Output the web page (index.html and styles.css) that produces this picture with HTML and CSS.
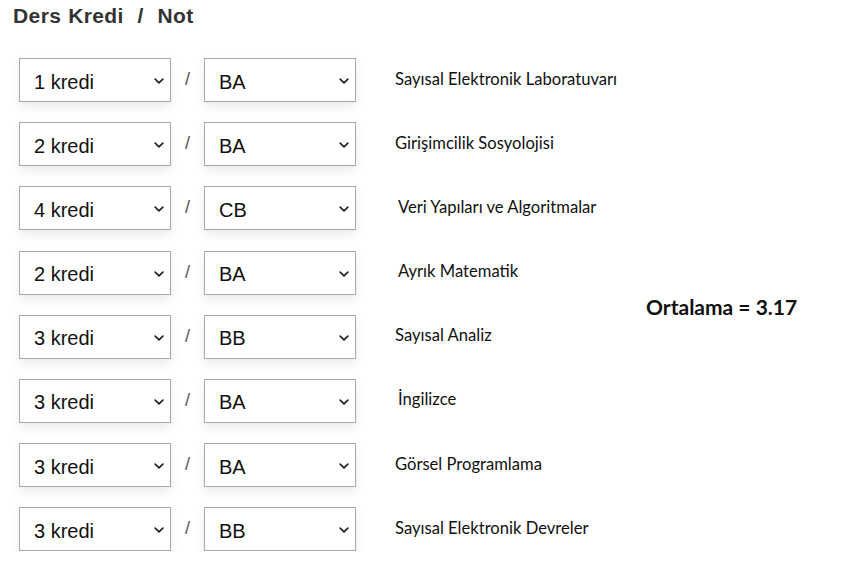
FILE: index.html
```html
<!DOCTYPE html>
<html lang="tr">
<head>
<meta charset="utf-8">
<title>Ortalama Hesaplama</title>
<link rel="stylesheet" href="styles.css">
</head>
<body>
<h1 class="title">Ders Kredi &nbsp;/&nbsp; Not</h1>
<div class="layout">
  <div class="rows">
    <div class="row">
      <div class="sel sel-kredi"><select><option>1 kredi</option></select><svg class="chev" viewBox="0 0 10 6"><path d="M1.2 1.2 L5 4.8 L8.8 1.2" /></svg></div>
      <span class="slash">/</span>
      <div class="sel sel-not"><select><option>BA</option></select><svg class="chev" viewBox="0 0 10 6"><path d="M1.2 1.2 L5 4.8 L8.8 1.2" /></svg></div>
      <span class="course">Sayısal Elektronik Laboratuvarı</span>
    </div>
    <div class="row">
      <div class="sel sel-kredi"><select><option>2 kredi</option></select><svg class="chev" viewBox="0 0 10 6"><path d="M1.2 1.2 L5 4.8 L8.8 1.2" /></svg></div>
      <span class="slash">/</span>
      <div class="sel sel-not"><select><option>BA</option></select><svg class="chev" viewBox="0 0 10 6"><path d="M1.2 1.2 L5 4.8 L8.8 1.2" /></svg></div>
      <span class="course">Girişimcilik Sosyolojisi</span>
    </div>
    <div class="row">
      <div class="sel sel-kredi"><select><option>4 kredi</option></select><svg class="chev" viewBox="0 0 10 6"><path d="M1.2 1.2 L5 4.8 L8.8 1.2" /></svg></div>
      <span class="slash">/</span>
      <div class="sel sel-not"><select><option>CB</option></select><svg class="chev" viewBox="0 0 10 6"><path d="M1.2 1.2 L5 4.8 L8.8 1.2" /></svg></div>
      <span class="course shift">Veri Yapıları ve Algoritmalar</span>
    </div>
    <div class="row">
      <div class="sel sel-kredi"><select><option>2 kredi</option></select><svg class="chev" viewBox="0 0 10 6"><path d="M1.2 1.2 L5 4.8 L8.8 1.2" /></svg></div>
      <span class="slash">/</span>
      <div class="sel sel-not"><select><option>BA</option></select><svg class="chev" viewBox="0 0 10 6"><path d="M1.2 1.2 L5 4.8 L8.8 1.2" /></svg></div>
      <span class="course shift">Ayrık Matematik</span>
    </div>
    <div class="row">
      <div class="sel sel-kredi"><select><option>3 kredi</option></select><svg class="chev" viewBox="0 0 10 6"><path d="M1.2 1.2 L5 4.8 L8.8 1.2" /></svg></div>
      <span class="slash">/</span>
      <div class="sel sel-not"><select><option>BB</option></select><svg class="chev" viewBox="0 0 10 6"><path d="M1.2 1.2 L5 4.8 L8.8 1.2" /></svg></div>
      <span class="course">Sayısal Analiz</span>
    </div>
    <div class="row">
      <div class="sel sel-kredi"><select><option>3 kredi</option></select><svg class="chev" viewBox="0 0 10 6"><path d="M1.2 1.2 L5 4.8 L8.8 1.2" /></svg></div>
      <span class="slash">/</span>
      <div class="sel sel-not"><select><option>BA</option></select><svg class="chev" viewBox="0 0 10 6"><path d="M1.2 1.2 L5 4.8 L8.8 1.2" /></svg></div>
      <span class="course shift">İngilizce</span>
    </div>
    <div class="row">
      <div class="sel sel-kredi"><select><option>3 kredi</option></select><svg class="chev" viewBox="0 0 10 6"><path d="M1.2 1.2 L5 4.8 L8.8 1.2" /></svg></div>
      <span class="slash">/</span>
      <div class="sel sel-not"><select><option>BA</option></select><svg class="chev" viewBox="0 0 10 6"><path d="M1.2 1.2 L5 4.8 L8.8 1.2" /></svg></div>
      <span class="course">Görsel Programlama</span>
    </div>
    <div class="row">
      <div class="sel sel-kredi"><select><option>3 kredi</option></select><svg class="chev" viewBox="0 0 10 6"><path d="M1.2 1.2 L5 4.8 L8.8 1.2" /></svg></div>
      <span class="slash">/</span>
      <div class="sel sel-not"><select><option>BB</option></select><svg class="chev" viewBox="0 0 10 6"><path d="M1.2 1.2 L5 4.8 L8.8 1.2" /></svg></div>
      <span class="course">Sayısal Elektronik Devreler</span>
    </div>
  </div>
  <div class="result">Ortalama = 3.17</div>
</div>
</body>
</html>
```
FILE: styles.css
```css
html, body {
  margin: 0;
  padding: 0;
  background: #ffffff;
}
body {
  padding: 0 0 0 13px;
  font-family: "Liberation Sans", Arial, sans-serif;
}
.title {
  margin: 0;
  padding-top: 4px;
  font-size: 21px;
  line-height: 24px;
  font-weight: bold;
  color: #333333;
  letter-spacing: 0.4px;
  word-spacing: 0.6px;
  white-space: pre;
}
.layout {
  display: flex;
  align-items: center;
  margin-top: 30px;
}
.rows {
  display: flex;
  flex-direction: column;
  gap: 20.2px;
  padding-left: 6px;
}
.row {
  display: flex;
  align-items: center;
  height: 44px;
}
.sel {
  position: relative;
  width: 152px;
  height: 44px;
  box-shadow: 0 5px 10px rgba(0, 0, 0, 0.08);
}
.sel select {
  -webkit-appearance: none;
  appearance: none;
  box-sizing: border-box;
  width: 100%;
  height: 100%;
  margin: 0;
  padding: 3px 0 0 14px;
  border: 1px solid #a9a9a9;
  border-radius: 0;
  background: #ffffff;
  font-family: "Liberation Sans", Arial, sans-serif;
  font-size: 20px;
  color: #111111;
  outline: none;
}
.chev {
  position: absolute;
  right: 7px;
  top: 20px;
  width: 10px;
  height: 6px;
  fill: none;
  stroke: #222222;
  stroke-width: 1.7;
  stroke-linecap: round;
  stroke-linejoin: round;
  pointer-events: none;
}
.slash {
  width: 33px;
  text-align: center;
  font-size: 18px;
  color: #555555;
  margin-top: -1px;
}
.course {
  margin-left: 39px;
  margin-top: -3px;
  font-family: Lato, "Open Sans", sans-serif;
  font-size: 16.6px;
  color: #111111;
}
.course.shift {
  margin-left: 42px;
}
.result {
  margin-left: 29px;
  margin-top: 4px;
  font-family: Lato, "Open Sans", sans-serif;
  font-weight: bold;
  font-size: 21px;
  color: #111111;
}
```
